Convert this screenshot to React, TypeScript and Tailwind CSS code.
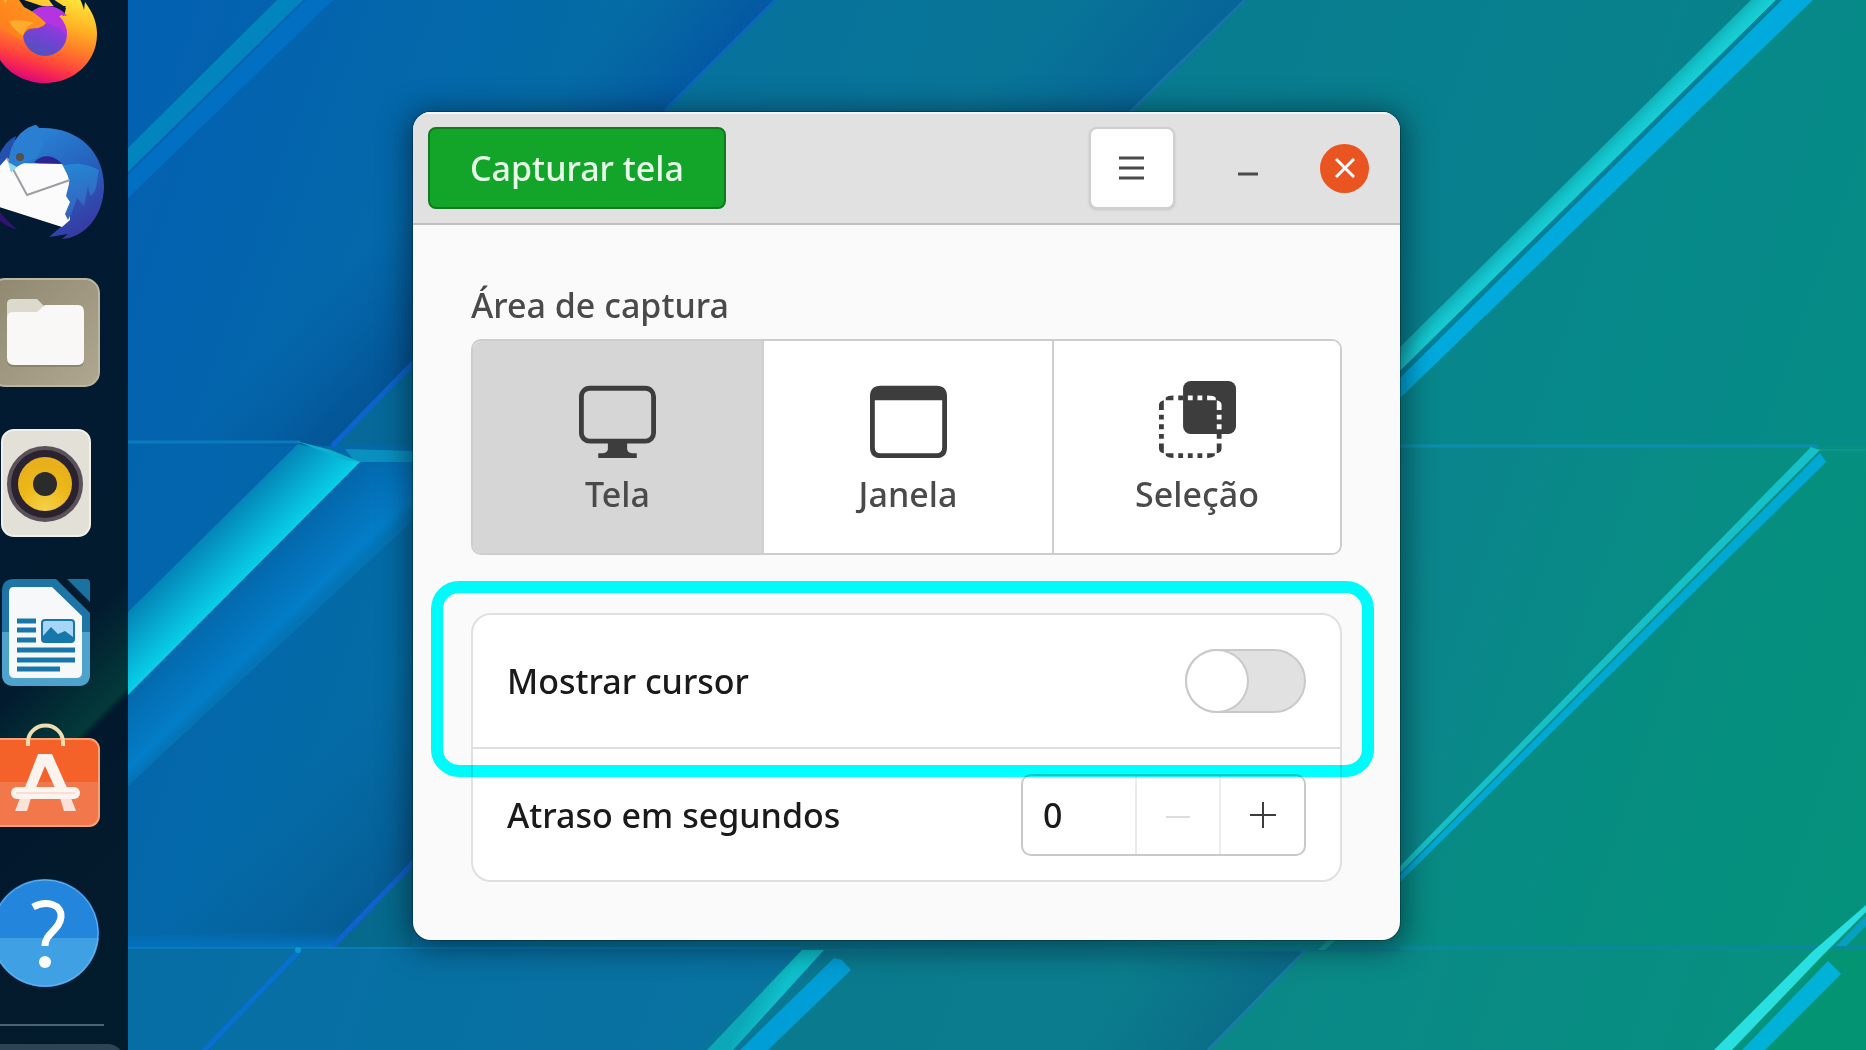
import { useState } from "react";
import type { ReactNode } from "react";

function Wallpaper() {
  return (
    <svg
      aria-hidden="true"
      className="absolute inset-0 h-full w-full"
      viewBox="0 0 1866 1050"
      preserveAspectRatio="xMidYMid slice"
    >
      <defs>
        <linearGradient id="base" gradientUnits="userSpaceOnUse" x1="128" y1="200" x2="1866" y2="800">
          <stop offset="0" stopColor="#0361b1" />
          <stop offset="0.2" stopColor="#046ba6" />
          <stop offset="0.5" stopColor="#0a7895" />
          <stop offset="0.75" stopColor="#0a868b" />
          <stop offset="1" stopColor="#05947c" />
        </linearGradient>
        <linearGradient id="bigCyan" gradientUnits="userSpaceOnUse" x1="205" y1="535" x2="246" y2="576">
          <stop offset="0" stopColor="#0484b8" />
          <stop offset="1" stopColor="#08cfe8" />
        </linearGradient>
        <linearGradient id="bigBlue" gradientUnits="userSpaceOnUse" x1="244" y1="580" x2="290" y2="628">
          <stop offset="0" stopColor="#0468ac" />
          <stop offset="0.85" stopColor="#037dc8" />
          <stop offset="1" stopColor="#0474b6" />
        </linearGradient>
        <linearGradient id="shadeA" gradientUnits="userSpaceOnUse" x1="640" y1="-10" x2="720" y2="55">
          <stop offset="0" stopColor="#045aa2" stopOpacity="0" />
          <stop offset="1" stopColor="#0459a2" />
        </linearGradient>
        <linearGradient id="shadeB" gradientUnits="userSpaceOnUse" x1="1080" y1="-30" x2="1187" y2="55">
          <stop offset="0" stopColor="#06669a" stopOpacity="0" />
          <stop offset="1" stopColor="#066698" />
        </linearGradient>
        <linearGradient id="shadeC" gradientUnits="userSpaceOnUse" x1="290" y1="330" x2="372" y2="410">
          <stop offset="0" stopColor="#04589e" stopOpacity="0" />
          <stop offset="1" stopColor="#045494" />
        </linearGradient>
        <linearGradient id="shadeD" gradientUnits="userSpaceOnUse" x1="270" y1="810" x2="372" y2="905">
          <stop offset="0" stopColor="#065f9c" stopOpacity="0" />
          <stop offset="1" stopColor="#065c94" />
        </linearGradient>
        <linearGradient id="glow" x1="0" y1="0" x2="0" y2="1">
          <stop offset="0" stopColor="#0470bd" stopOpacity="0" />
          <stop offset="1" stopColor="#0473c0" />
        </linearGradient>
        <linearGradient id="shadeE" gradientUnits="userSpaceOnUse" x1="1150" y1="930" x2="1257" y2="1000">
          <stop offset="0" stopColor="#0a6f88" stopOpacity="0" />
          <stop offset="1" stopColor="#0a6c88" />
        </linearGradient>
        <linearGradient id="stripeCyan" gradientUnits="userSpaceOnUse" x1="1575" y1="170" x2="1592" y2="187">
          <stop offset="0" stopColor="#0fa8b0" />
          <stop offset="0.5" stopColor="#14c4cc" />
          <stop offset="1" stopColor="#1ad2da" />
        </linearGradient>
        <linearGradient id="lowCyan" gradientUnits="userSpaceOnUse" x1="757" y1="995" x2="775" y2="1005">
          <stop offset="0" stopColor="#0ca8b8" />
          <stop offset="1" stopColor="#0fc0cc" />
        </linearGradient>
      </defs>
      <rect width="1866" height="1050" fill="url(#base)" />

      {/* top facets */}
      <path d="M775 0H1245L1130 112L795 442H333Z" fill="#077596" opacity="0.5" />
      <path d="M1245 0H1750L1400 347V442H795Z" fill="#077e8e" opacity="0.6" />
      <path d="M480 0H775L333 446L128 446V352Z" fill="url(#shadeA)" />
      <path d="M900 0H1245L1130 112H790Z" fill="url(#shadeB)" />
      <path d="M775 0L665 110" stroke="#0b66c0" strokeWidth="3" />
      <path d="M1245 0L1130 112" stroke="#1874ac" strokeWidth="3" />
      <path d="M1812 0H1866V446H1400V398Z" fill="#05898a" opacity="0.55" />

      {/* left stripe pair */}
      <path d="M128 148L277 0H303L128 172Z" fill="#0284be" />
      <path d="M128 175L306 0H333L128 198Z" fill="#0270c2" />
      <path d="M128 446V400L420 110V360L333 446Z" fill="url(#shadeC)" />
      <path d="M413 362L333 446H413Z" fill="#06699a" />
      <path d="M414 362L332 446" stroke="#0d63cf" strokeWidth="5" />
      <path d="M128 442H300" stroke="#0a7cbd" strokeWidth="3" />
      <path d="M128 444H298L128 612Z" fill="#0366ad" opacity="0.6" />
      <path d="M345 449L413 451V462H355Z" fill="#0a90bf" />

      {/* wide cyan band */}
      <path d="M360 462L413 462V520L128 786V694Z" fill="url(#bigBlue)" />
      <path d="M128 612L298 444L331 451L360 462L128 695Z" fill="url(#bigCyan)" />
      <path d="M296 441L331 450L360 462L345 460Z" fill="#0fb0cc" />

      {/* bottom left facets */}
      <path d="M128 946V860L413 640V866L333 946Z" fill="url(#shadeD)" />
      <path d="M128 936L344 930L333 948H128Z" fill="url(#glow)" />
      <path d="M413 864L333 948H413Z" fill="#066a8e" />
      <path d="M414 862L332 947" stroke="#1062cf" strokeWidth="5" />
      <path d="M128 948H800" stroke="#0a7cb8" strokeWidth="2" />
      <path d="M128 950H800L700 1050H128Z" fill="#0870a4" opacity="0.7" />
      <path d="M300 950L203 1052" stroke="#0870d0" strokeWidth="5" />
      <circle cx="298" cy="950" r="3" fill="#0c9cc8" />

      {/* bottom centre */}
      <path d="M835 950H1306L1208 1050H740Z" fill="#0a7c8c" opacity="0.8" />
      <path d="M1100 950H1306L1208 1050H1000Z" fill="url(#shadeE)" />
      <path d="M800 950H1400" stroke="#0f7c98" strokeWidth="3" />
      <path d="M802 950H824L733 1050H707Z" fill="url(#lowCyan)" />
      <path d="M834 958L842 960L851 970L768 1050H740Z" fill="#009ed6" />
      <path d="M1306 950L1208 1050" stroke="#1a7ca8" strokeWidth="3" />
      <path d="M1306 951H1815L1714 1050H1210Z" fill="#0a8c84" opacity="0.5" />
      <path d="M1328 940H1336L1325 950H1318Z" fill="#12a494" />

      {/* right stripes */}
      <path d="M1400 347L1751 0H1776L1400 371Z" fill="url(#stripeCyan)" />
      <path d="M1400 371L1776 0H1782L1400 378Z" fill="#067f98" />
      <path d="M1400 378L1782 0H1813L1400 398Z" fill="#00aadc" />
      <path d="M1400 446H1818" stroke="#0c8fae" strokeWidth="3" />
      <path d="M1818 450H1866" stroke="#0c9690" strokeWidth="2" />
      <path d="M1826 464L1866 450V946H1400V882Z" fill="#058f7c" opacity="0.4" />
      <path d="M1400 866L1811 447L1820 450L1400 873Z" fill="#16c0c8" />
      <path d="M1400 875L1820 453L1826 462L1400 882Z" fill="#00a8d4" />
      <path d="M1400 948H1866" stroke="#0a8a98" strokeWidth="4" />
      <path d="M1825 950H1866V1050H1765Z" fill="#03946f" opacity="0.7" />
      <path d="M1866 905V912L1824 954L1732 1050H1714L1812 952Z" fill="#2adfdf" />
      <path d="M1866 915V926L1846 946H1836Z" fill="#06a0c0" />
      <path d="M1828 961L1841 974L1765 1050H1742Z" fill="#00b2d8" />
    </svg>
  );
}

function Firefox() {
  return (
    <svg viewBox="0 0 128 150" className="h-full w-full" aria-hidden="true">
      <defs>
        <linearGradient id="ffBody" x1="0.7" y1="0.1" x2="0.4" y2="1">
          <stop offset="0" stopColor="#ffe83c" />
          <stop offset="0.3" stopColor="#ffb424" />
          <stop offset="0.55" stopColor="#ff7a2a" />
          <stop offset="0.75" stopColor="#ff453c" />
          <stop offset="0.9" stopColor="#f01c5c" />
          <stop offset="1" stopColor="#d8087c" />
        </linearGradient>
        <linearGradient id="ffGlobe" x1="0.7" y1="0" x2="0.3" y2="1">
          <stop offset="0" stopColor="#b833e1" />
          <stop offset="0.5" stopColor="#7a3fd8" />
          <stop offset="1" stopColor="#4a55b8" />
        </linearGradient>
        <linearGradient id="ffHead" x1="0" y1="1" x2="1" y2="0">
          <stop offset="0" stopColor="#ff7a1c" />
          <stop offset="1" stopColor="#ffa01e" />
        </linearGradient>
      </defs>
      <path d="M-8 75C-8 55 -2 40 6 30H44C46 40 54 50 64 58L66 50C56 42 44 38 44 26H66C78 34 82 44 84 52L85 44C94 56 97 66 97 76C97 104 74 125 45 125C16 125 -8 104 -8 75Z" fill="url(#ffBody)" />
      <path d="M6 40L24 42L42 48H66L58 60H30Z" fill="#021a30" />
      <circle cx="45" cy="76" r="22" fill="url(#ffGlobe)" />
      <path d="M31 54C42 45 58 46 67 58C64 57 61 57 59 58C64 63 67 70 67 78L60 70L40 62Z" fill="#b435e0" />
      <path d="M0 42L2 36L5 46L12 32L24 49C35 54 40 60 46 65C42 71 34 70 29 71C24 74 23 78 22 82C14 78 4 74 0 66Z" fill="url(#ffHead)" />
      <path d="M9 63C18 61 28 63 34 65C28 67 24 72 23 78C18 74 12 70 9 63Z" fill="#ffab2e" />
    </svg>
  );
}

function Thunderbird() {
  return (
    <svg viewBox="0 0 128 150" className="h-full w-full" aria-hidden="true">
      <defs>
        <linearGradient id="tbBody" x1="0.3" y1="0" x2="0.8" y2="1">
          <stop offset="0" stopColor="#2a86d8" />
          <stop offset="0.5" stopColor="#2560bc" />
          <stop offset="1" stopColor="#3a35a0" />
        </linearGradient>
        <linearGradient id="tbWing" x1="0" y1="0" x2="0.2" y2="1">
          <stop offset="0" stopColor="#2488d4" />
          <stop offset="1" stopColor="#3560bc" />
        </linearGradient>
      </defs>
      <path d="M-6 60C0 40 8 32 16 28L10 56L-6 80Z" fill="#2450b0" />
      <path d="M-4 98C2 108 8 114 18 122C4 118 -6 110 -10 98Z" fill="#321470" />
      <path d="M9 54C10 34 22 20 36 17L39 20C78 18 104 44 104 78C104 108 84 130 62 131L68 126L49 129L62 118L50 80Z" fill="url(#tbBody)" />
      <path d="M34 54C46 42 62 50 68 66L44 58Z" fill="#2c2590" />
      <path d="M-2 60L7 50L14 55L62 56C68 62 70 74 70 84L70 112L62 119L-4 98Z" fill="#fbfbfc" />
      <path d="M7 50L27 87L70 72" fill="none" stroke="#9c9ea4" strokeWidth="2" />
      <path d="M62 56C68 60 74 50 99 62C96 74 98 84 90 88L88 78L84 98L77 90L72 104L68 112L65 106L70 94L66 88L70 72Z" fill="url(#tbWing)" />
      <path d="M9 54C10 34 22 20 36 17L39 20C46 26 44 40 36 50C28 54 18 56 11 64Z" fill="#2b7fd2" />
      <path d="M8 54L17 59L11 64Z" fill="#90d8e8" />
      <circle cx="20" cy="49" r="4" fill="#54504a" />
    </svg>
  );
}

function Files() {
  return (
    <svg viewBox="0 0 128 150" className="h-full w-full" aria-hidden="true">
      <defs>
        <linearGradient id="filesBg" x1="0" y1="0" x2="1" y2="1">
          <stop offset="0" stopColor="#8f886f" />
          <stop offset="1" stopColor="#b0a791" />
        </linearGradient>
      </defs>
      <rect x="-9" y="21" width="108" height="107" rx="14" fill="url(#filesBg)" stroke="#bcb5a2" strokeWidth="2" />
      <path d="M7 60V46Q7 41 12 41H37L45 49V60Z" fill="#dcdacd" />
      <path d="M7 62Q7 55 13 55H37L46 48H78Q84 48 84 54V103Q84 109 77 109H14Q7 109 7 102Z" fill="#6f6a58" opacity="0.5" />
      <path d="M7 60Q7 54 13 54H37L45 47H78Q84 47 84 54V101Q84 107 77 107H14Q7 107 7 100Z" fill="#f9f8f7" />
    </svg>
  );
}

function Speaker() {
  return (
    <svg viewBox="0 0 128 150" className="h-full w-full" aria-hidden="true">
      <defs>
        <radialGradient id="cone" cx="0.5" cy="0.95" r="0.8">
          <stop offset="0" stopColor="#f6d04a" />
          <stop offset="0.6" stopColor="#ecb818" />
          <stop offset="1" stopColor="#e8b01c" />
        </radialGradient>
      </defs>
      <rect x="2" y="22" width="88" height="106" rx="12" fill="#e3e0d8" stroke="#f2f0ea" strokeWidth="2" />
      <circle cx="45" cy="76" r="36" fill="#2b2230" stroke="#5a5258" strokeWidth="4" />
      <circle cx="45" cy="76" r="27" fill="url(#cone)" />
      <circle cx="45" cy="76" r="12" fill="#2b2b2b" />
    </svg>
  );
}

function Writer() {
  return (
    <svg viewBox="0 0 128 150" className="h-full w-full" aria-hidden="true">
      <path d="M14 21H56L90 55V116Q90 128 78 128H14Q2 128 2 116V33Q2 21 14 21Z" fill="#1e75a5" />
      <path d="M2 74H90V116Q90 128 78 128H14Q2 128 2 116Z" fill="#4ea3cd" />
      <path d="M14 29H52L82 58V114Q82 120 76 120H15Q9 120 9 114V34Q9 29 14 29Z" fill="#f7f8fa" />
      <path d="M67 21H86Q90 21 90 25V44Z" fill="#19729f" />
      <g stroke="#1777ab" strokeWidth="5">
        <path d="M17 63H36M17 72H36M17 82H36M17 92H75M17 102H75M17 111H60" />
      </g>
      <rect x="42" y="62" width="32" height="22" rx="3" fill="#a5d6f7" stroke="#1777ab" strokeWidth="2" />
      <path d="M43 78L51 69L58 76L65 73L73 79V83H43Z" fill="#1777ab" />
    </svg>
  );
}

function Software() {
  return (
    <svg viewBox="0 0 128 150" className="h-full w-full" aria-hidden="true">
      <rect x="-9" y="31" width="108" height="87" rx="10" fill="#f4622a" />
      <path d="M-9 74H99V108Q99 118 89 118H-9Z" fill="#f2774a" />
      <rect x="-9" y="31" width="108" height="87" rx="10" fill="none" stroke="#f9a074" strokeWidth="2" />
      <path d="M28 38V34A17 16 0 0 1 63 34V38" fill="none" stroke="#f0dcae" strokeWidth="4" />
      <path d="M38 46H52L68 82H56L45 58L35 82H24Z" fill="#fdf3ee" />
      <path d="M20 90H31L27 103H15ZM60 90H71L76 103H64Z" fill="#fbe2d8" />
      <rect x="11" y="79" width="69" height="12" rx="6" fill="#fdf4f0" />
      <path d="M16 85H75" stroke="#f7c8b8" strokeWidth="1" />
    </svg>
  );
}

function Help() {
  return (
    <svg viewBox="0 0 128 150" className="h-full w-full" aria-hidden="true">
      <circle cx="45" cy="75" r="54" fill="#2485dc" />
      <path d="M-8.770 80H98.770A54 54 0 0 1 -8.770 80Z" fill="#40a0e4" />
      <circle cx="45" cy="75" r="53" fill="none" stroke="#6cb4ec" strokeWidth="1" />
      <path d="M33 49C46 42 62 46 61 59C60 72 45 75 45 88" fill="none" stroke="#fff" strokeWidth="7" />
      <circle cx="45" cy="104" r="6" fill="#fff" />
    </svg>
  );
}

const dockApps: { name: string; icon: ReactNode }[] = [
  { name: "Firefox", icon: <Firefox /> },
  { name: "Thunderbird", icon: <Thunderbird /> },
  { name: "Arquivos", icon: <Files /> },
  { name: "Rhythmbox", icon: <Speaker /> },
  { name: "LibreOffice Writer", icon: <Writer /> },
  { name: "Ubuntu Software", icon: <Software /> },
  { name: "Ajuda", icon: <Help /> },
];

function Dock() {
  return (
    <nav
      aria-label="Dock"
      className="relative flex w-32 shrink-0 flex-col overflow-hidden bg-[linear-gradient(135deg,#021a33_0%,#021b2f_60%,#033a3a_69%,#02192d_70%,#021c2c_100%)]"
    >
      <div className="-mt-[42px] flex shrink-0 flex-col">
        {dockApps.map((app) => (
          <button key={app.name} type="button" aria-label={app.name} className="h-[150px] w-full">
            {app.icon}
          </button>
        ))}
      </div>
      <hr className="mt-4 mr-6 shrink-0 border-t-2 border-[#4a6272]" />
      <button
        type="button"
        aria-label="Mostrar aplicativos"
        className="mt-[18px] mr-1 h-[110px] shrink-0 rounded-tr-2xl bg-[#2c4454]"
      />
    </nav>
  );
}

function ScreenIcon() {
  return (
    <svg viewBox="0 0 16 16" className="size-[77px]" aria-hidden="true">
      <rect x="0.5" y="1.5" width="15" height="11" rx="1.7" fill="none" stroke="#3d3d3d" />
      <path d="M6 12.5H10V14.2Q10.2 15 11 15H12V16H4V15H5Q5.800 15 6 14.200Z" fill="#3d3d3d" />
    </svg>
  );
}

function WindowIcon() {
  return (
    <svg viewBox="0 0 16 16" className="size-[77px]" aria-hidden="true">
      <path
        fillRule="evenodd"
        d="M2.200 1H13.800Q16 1 16 3.200V13.800Q16 16 13.800 16H2.200Q0 16 0 13.800V3.200Q0 1 2.200 1ZM1 4V13.800Q1 15 2.200 15H13.800Q15 15 15 13.800V4Z"
        fill="#3d3d3d"
      />
    </svg>
  );
}

function SelectionIcon() {
  return (
    <svg viewBox="0 0 16 16" className="size-[77px]" aria-hidden="true">
      <rect x="5" y="0" width="11" height="11" rx="1.6" fill="#3d3d3d" />
      <path
        d="M1.400 4V3.500Q1.800 3 3 3V4ZM4 3H5V4H4ZM0 6V5Q0 4.200 1 4V6ZM0 7H1V8H0ZM0 9H1V10H0ZM0 11H1V12H0ZM0 13H1V15Q0 14.800 0 14ZM1.400 15H3V16Q1.800 16 1.400 15.500ZM4 15H5V16H4ZM6 15H7V16H6ZM8 15H9V16H8ZM10 15H11.600V15.500Q11.200 16 10 16ZM12 11H13V12H12ZM12 13H13V14Q13 14.800 12 15Z"
        fill="#3d3d3d"
      />
      <path d="M6 3H7V4H6ZM8 3H9V4H8ZM10 3Q11.400 3 11.800 3.500V4H10ZM12 4Q13 4.200 13 5V6H12ZM12 7H13V8H12ZM12 9H13V10H12Z" fill="#fff" />
    </svg>
  );
}

const areas: { label: string; icon: ReactNode }[] = [
  { label: "Tela", icon: <ScreenIcon /> },
  { label: "Janela", icon: <WindowIcon /> },
  { label: "Seleção", icon: <SelectionIcon /> },
];

function TitleBar() {
  return (
    <header className="flex items-center justify-between border-b-2 border-[#bfbfbf] bg-[#e1e1e1] pt-[15px] pr-[31px] pb-3.5 pl-[15px] shadow-[inset_0_2px_0_#f6f6f6]">
      <button
        type="button"
        className="h-[82px] rounded-lg border-2 border-[#147a22] bg-[#12a52a] px-10 text-[#e9fbe9]"
      >
        Capturar tela
      </button>
      <div className="flex items-center">
        <button
          type="button"
          aria-label="Menu"
          className="flex h-[82px] w-[86px] items-center justify-center rounded-lg border-2 border-[#cfcfcf] bg-white shadow-sm"
        >
          <svg viewBox="0 0 26 24" className="h-6 w-[26px]" aria-hidden="true">
            <path d="M0 2H25M0 12H25M0 22H25" stroke="#4a4a4a" strokeWidth="3" />
          </svg>
        </button>
        <button type="button" aria-label="Minimizar" className="ml-12 flex size-[49px] items-center justify-center">
          <svg viewBox="0 0 20 20" className="size-5" aria-hidden="true">
            <path d="M0 16H20" stroke="#4a4a4a" strokeWidth="3" />
          </svg>
        </button>
        <button
          type="button"
          aria-label="Fechar"
          className="ml-12 flex size-[49px] items-center justify-center rounded-full bg-[#e95420]"
        >
          <svg viewBox="0 0 20 20" className="size-5" aria-hidden="true">
            <path d="M1 1L19 19M19 1L1 19" stroke="#fff" strokeWidth="3" />
          </svg>
        </button>
      </div>
    </header>
  );
}

export default function App() {
  const [area, setArea] = useState("Tela");
  const [showCursor, setShowCursor] = useState(false);
  const [delay, setDelay] = useState(0);

  return (
    <div className="relative flex h-screen overflow-hidden bg-[#0a7895] font-['Noto_Sans','Open_Sans',sans-serif] text-[34px] leading-[48px] font-medium">
      <Wallpaper />
      <Dock />
      <main className="relative min-w-0 flex-1 pt-28 pr-8 pl-[285px]">
        <section
          aria-label="Captura de tela"
          className="w-full max-w-[987px] overflow-hidden rounded-[18px] bg-[#fafafa] shadow-[0_4px_28px_6px_rgba(0,20,30,0.5),0_0_0_1px_rgba(0,30,40,0.35)]"
        >
          <TitleBar />
          <div className="px-[58px] pt-14 pb-[58px]">
            <h2 id="area-title" className="text-[#4a4a4a]">
              Área de captura
            </h2>
            <div
              role="group"
              aria-labelledby="area-title"
              className="mt-2.5 grid grid-cols-[291fr_290fr_286fr] divide-x-2 divide-[#cfcfcf] overflow-hidden rounded-[10px] border-2 border-[#cdcdcd] bg-white"
            >
              {areas.map((item) => (
                <button
                  key={item.label}
                  type="button"
                  aria-pressed={area === item.label}
                  onClick={() => setArea(item.label)}
                  className={
                    area === item.label
                      ? "flex flex-col items-center gap-3 bg-[#d6d6d6] pt-10 pb-[35px] text-[#4a4a4a]"
                      : "flex flex-col items-center gap-3 bg-white pt-10 pb-[35px] text-[#4a4a4a]"
                  }
                >
                  {item.icon}
                  <span>{item.label}</span>
                </button>
              ))}
            </div>

            <div className="relative mt-[58px] rounded-[20px] border-2 border-[#e0e0e0] bg-white">
              <div className="flex h-[134px] items-center justify-between border-b-2 border-[#dedede] px-[34px]">
                <label htmlFor="show-cursor" className="text-[#1a1a1a]">
                  Mostrar cursor
                </label>
                <input
                  id="show-cursor"
                  type="checkbox"
                  role="switch"
                  checked={showCursor}
                  onChange={(e) => setShowCursor(e.target.checked)}
                  className="flex h-16 w-[121px] appearance-none items-center rounded-full border-2 border-[#c9c9c9] bg-[#e1e1e1] before:size-[60px] before:rounded-full before:bg-white before:shadow-[0_0_0_2px_#c9c9c9] checked:justify-end checked:bg-[#12a52a]"
                />
              </div>
              <div className="flex h-[131px] items-center justify-between px-[34px]">
                <label htmlFor="delay" className="text-[#1a1a1a]">
                  Atraso em segundos
                </label>
                <div className="flex h-[82px] overflow-hidden rounded-[10px] border-2 border-[#c9c9c9] bg-white">
                  <input
                    id="delay"
                    type="text"
                    inputMode="numeric"
                    value={delay}
                    onChange={(e) => setDelay(Number(e.target.value) || 0)}
                    className="w-28 bg-transparent pl-5 text-[#1a1a1a] outline-none"
                  />
                  <button
                    type="button"
                    aria-label="Diminuir"
                    disabled={delay === 0}
                    onClick={() => setDelay(delay - 1)}
                    className="flex w-[84px] items-center justify-center border-l-2 border-[#ececec] text-[#3d3d3d] disabled:text-[#dcdcdc]"
                  >
                    <svg viewBox="0 0 26 26" className="size-[26px]" aria-hidden="true">
                      <path d="M1 15H25" stroke="currentColor" strokeWidth="2" />
                    </svg>
                  </button>
                  <button
                    type="button"
                    aria-label="Aumentar"
                    onClick={() => setDelay(delay + 1)}
                    className="flex w-[85px] items-center justify-center border-l-2 border-[#ececec] text-[#3d3d3d]"
                  >
                    <svg viewBox="0 0 26 26" className="size-[26px]" aria-hidden="true">
                      <path d="M0 13H26M13 0V26" stroke="currentColor" strokeWidth="2" />
                    </svg>
                  </button>
                </div>
              </div>
              <div
                aria-hidden="true"
                className="pointer-events-none absolute -top-[34px] -right-[34px] -left-[42px] h-[196px] rounded-[28px] border-[12px] border-[#00ffff] mix-blend-multiply"
              />
            </div>
          </div>
        </section>
      </main>
    </div>
  );
}
